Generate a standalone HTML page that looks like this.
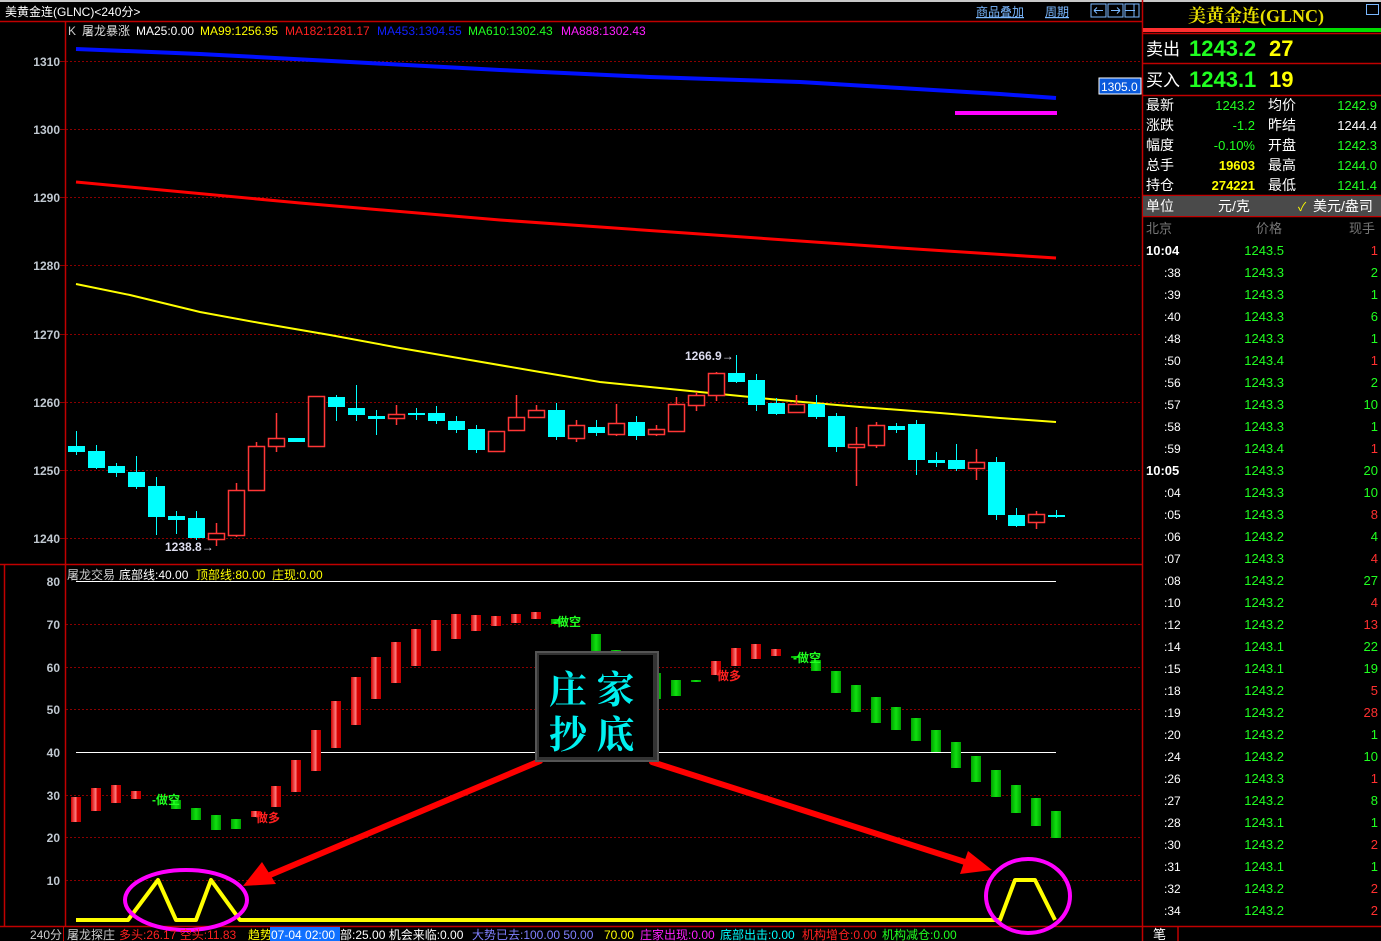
<!DOCTYPE html>
<html><head><meta charset="utf-8"><style>
html,body{margin:0;padding:0;background:#000;width:1381px;height:941px;overflow:hidden;font-family:"Liberation Sans","Noto Sans CJK SC",sans-serif}
svg{display:block}
text{font-family:"Liberation Sans","Noto Sans CJK SC",sans-serif}
</style></head><body>
<svg width="1381" height="941" viewBox="0 0 1381 941" xmlns="http://www.w3.org/2000/svg">
<rect width="1381" height="941" fill="#000"/>
<rect x="0" y="0" width="1381" height="2" fill="#c8c8c8"/>
<text x="5" y="16" fill="#fff" font-size="12">美黄金连(GLNC)&lt;240分&gt;</text>
<text x="976" y="16" fill="#7ab8ff" font-size="12" text-decoration="underline">商品叠加</text>
<text x="1045" y="16" fill="#7ab8ff" font-size="12" text-decoration="underline">周期</text>
<g fill="none" stroke="#7ab8ff" stroke-width="1">
<rect x="1091" y="4" width="15" height="13"/><rect x="1108" y="4" width="15" height="13"/><rect x="1125" y="4" width="14" height="13"/>
<path d="M1094 10.5h9M1094 10.5l3-3M1094 10.5l3 3M1120 10.5h-9M1120 10.5l-3-3M1120 10.5l-3 3M1125 10.5h10M1134 4v13"/>
</g>
<g stroke="#c00000" stroke-width="1.5" fill="none">
<path d="M0 21.5H1142M65.5 21V926M1142.5 0V941M0 564.5H1142M0 926.5H1142M4.5 564V926"/>
</g>
<g stroke="#8a0000" stroke-width="1" stroke-dasharray="2,2">
<path d="M66 61.5H1140M66 129.5H1140M66 197.5H1140M66 265.5H1140M66 334.5H1140M66 402.5H1140M66 470.5H1140M66 538.5H1140"/>
<path d="M66 624.5H1140M66 667.5H1140M66 709.5H1140M66 795.5H1140M66 837.5H1140M66 880.5H1140"/>
</g>
<g stroke="#8a0000"><path d="M60 61.5h5M60 129.5h5M60 197.5h5M60 265.5h5M60 334.5h5M60 402.5h5M60 470.5h5M60 538.5h5"/></g>
<g fill="#c0c8d0" font-size="12" font-weight="bold" text-anchor="end">
<text x="60" y="66">1310</text><text x="60" y="134">1300</text><text x="60" y="202">1290</text><text x="60" y="270">1280</text><text x="60" y="339">1270</text><text x="60" y="407">1260</text><text x="60" y="475">1250</text><text x="60" y="543">1240</text>
<text x="60" y="586">80</text><text x="60" y="629">70</text><text x="60" y="672">60</text><text x="60" y="714">50</text><text x="60" y="757">40</text><text x="60" y="800">30</text><text x="60" y="842">20</text><text x="60" y="885">10</text>
</g>
<g font-size="12">
<text x="68" y="35" fill="#ccc">K</text>
<text x="82" y="35" fill="#ddd">屠龙暴涨</text>
<text x="136" y="35" fill="#fff">MA25:0.00</text>
<text x="200" y="35" fill="#ffff00">MA99:1256.95</text>
<text x="285" y="35" fill="#ff2020">MA182:1281.17</text>
<text x="377" y="35" fill="#1020ff">MA453:1304.55</text>
<text x="468" y="35" fill="#20ff20">MA610:1302.43</text>
<text x="561" y="35" fill="#ff20ff">MA888:1302.43</text>
</g>
<rect x="1099" y="78" width="42" height="16" fill="#0a5adc" stroke="#fff" stroke-width="1"/>
<text x="1101" y="91" fill="#fff" font-size="12">1305.0</text>
<path d="M76 49 L200 54 L350 62 L500 70 L650 77 L800 82 L900 88 L1000 94 L1056 98" stroke="#0010ff" stroke-width="4" fill="none"/>
<path d="M955 113 H1057" stroke="#ff00ff" stroke-width="4"/>
<path d="M76 182 L300 203 L500 220 L700 234 L900 248 L1056 258" stroke="#ff0000" stroke-width="3" fill="none"/>
<path d="M76 284 L130 295 L200 312 L260 323 L330 335 L400 348 L470 360 L540 372 L600 382 L660 388 L720 394 L780 400 L860 407 L940 413 L1000 418 L1056 422" stroke="#ffff00" stroke-width="2" fill="none"/>
<g stroke="#00ffff" stroke-width="1">
<path d="M76.5 431V455M96.5 445V469M116.5 463V477M136.5 456V489M156.5 477V535M176.5 511V534M196.5 511V540M316.5 435V445M336.5 395V421M356.5 385V421M376.5 410V435M416.5 408V420M436.5 406V424M456.5 416V433M476.5 425V453M556.5 403V440M596.5 420V436M636.5 416V440M736.5 355V383M756.5 374V411M776.5 398V415M816.5 395V419M836.5 413V452M896.5 423V433M916.5 420V475M936.5 452V467M956.5 444V471M996.5 457V520M1016.5 508V527M1056.5 510V518"/>
</g>
<g fill="#00ffff">
<rect x="68" y="446" width="17" height="6"/><rect x="88" y="451" width="17" height="17"/><rect x="108" y="466" width="17" height="7"/><rect x="128" y="472" width="17" height="15"/><rect x="148" y="486" width="17" height="31"/><rect x="168" y="516" width="17" height="4"/><rect x="188" y="518" width="17" height="20"/>
<rect x="288" y="438" width="17" height="4"/><rect x="328" y="397" width="17" height="10"/><rect x="348" y="408" width="17" height="7"/><rect x="368" y="416" width="17" height="3"/><rect x="408" y="413" width="17" height="2"/><rect x="428" y="413" width="17" height="8"/><rect x="448" y="421" width="17" height="9"/><rect x="468" y="429" width="17" height="21"/><rect x="548" y="410" width="17" height="27"/><rect x="588" y="427" width="17" height="6"/><rect x="628" y="422" width="17" height="14"/>
<rect x="728" y="373" width="17" height="9"/><rect x="748" y="380" width="17" height="25"/><rect x="768" y="403" width="17" height="11"/><rect x="808" y="404" width="17" height="13"/><rect x="828" y="416" width="17" height="31"/><rect x="888" y="426" width="17" height="4"/><rect x="908" y="424" width="17" height="36"/><rect x="928" y="460" width="17" height="3"/><rect x="948" y="460" width="17" height="9"/><rect x="988" y="462" width="17" height="53"/><rect x="1008" y="515" width="17" height="11"/><rect x="1048" y="515" width="17" height="2"/>
</g>
<g stroke="#ff3636" stroke-width="1.5" fill="#000">
<path d="M216.5 523V546M236.5 483V537M256.5 442V491M276.5 413V452M396.5 405V425M516.5 395V430M536.5 405V418M576.5 420V442M616.5 404V436M656.5 425V436M676.5 397V431M696.5 392V411M716.5 372V401M796.5 395V413M856.5 427V486M876.5 422V448M976.5 449V480M1036.5 511V529"/>
<rect x="208.5" y="533.5" width="16" height="6"/><rect x="228.5" y="490.5" width="16" height="45"/><rect x="248.5" y="446.5" width="16" height="44"/><rect x="268.5" y="438.5" width="16" height="8"/><rect x="308.5" y="396.5" width="16" height="50"/><rect x="388.5" y="414.5" width="16" height="4"/><rect x="488.5" y="431.5" width="16" height="20"/><rect x="508.5" y="417.5" width="16" height="13"/><rect x="528.5" y="410.5" width="16" height="7"/><rect x="568.5" y="425.5" width="16" height="13"/><rect x="608.5" y="423.5" width="16" height="11"/><rect x="648.5" y="429.5" width="16" height="5"/><rect x="668.5" y="404.5" width="16" height="27"/><rect x="688.5" y="395.5" width="16" height="10"/><rect x="708.5" y="373.5" width="16" height="22"/><rect x="788.5" y="404.5" width="16" height="8"/><rect x="848.5" y="444.5" width="16" height="3"/><rect x="868.5" y="425.5" width="16" height="20"/><rect x="968.5" y="462.5" width="16" height="6"/><rect x="1028.5" y="514.5" width="16" height="8"/>
</g>
<text x="165" y="551" fill="#dde" font-size="12" font-weight="bold">1238.8→</text>
<text x="685" y="360" fill="#dde" font-size="12" font-weight="bold">1266.9→</text>
<g font-size="12"><text x="67" y="579" fill="#ccc">屠龙交易</text><text x="119" y="579" fill="#fff">底部线:40.00</text><text x="196" y="579" fill="#ffff00">顶部线:80.00</text><text x="272" y="579" fill="#ffff00">庄现:0.00</text></g>
<path d="M76 581.5H1056M76 752.5H1056" stroke="#fff" stroke-width="1"/>
<defs><linearGradient id="rg" x1="0" x2="1"><stop offset="0" stop-color="#d00000"/><stop offset=".5" stop-color="#ff8080"/><stop offset=".6" stop-color="#e00000"/><stop offset="1" stop-color="#c00000"/></linearGradient>
<linearGradient id="gg" x1="0" x2="1"><stop offset="0" stop-color="#00a000"/><stop offset=".5" stop-color="#10e010"/><stop offset="1" stop-color="#00a000"/></linearGradient></defs>
<g fill="url(#rg)">
<rect x="71" y="797" width="10" height="25"/><rect x="91" y="788" width="10" height="23"/><rect x="111" y="785" width="10" height="18"/><rect x="131" y="791" width="10" height="8"/><rect x="251" y="811" width="10" height="6"/><rect x="271" y="786" width="10" height="21"/><rect x="291" y="760" width="10" height="32"/><rect x="311" y="730" width="10" height="41"/><rect x="331" y="701" width="10" height="47"/><rect x="351" y="677" width="10" height="48"/><rect x="371" y="657" width="10" height="42"/><rect x="391" y="642" width="10" height="41"/><rect x="411" y="629" width="10" height="37"/><rect x="431" y="620" width="10" height="31"/><rect x="451" y="614" width="10" height="25"/><rect x="471" y="615" width="10" height="16"/><rect x="491" y="616" width="10" height="10"/><rect x="511" y="614" width="10" height="9"/><rect x="531" y="612" width="10" height="7"/>
<rect x="711" y="661" width="10" height="14"/><rect x="731" y="648" width="10" height="18"/><rect x="751" y="644" width="10" height="15"/><rect x="771" y="649" width="10" height="7"/>
</g>
<g fill="url(#gg)">
<rect x="171" y="800" width="10" height="9"/><rect x="191" y="808" width="10" height="12"/><rect x="211" y="815" width="10" height="15"/><rect x="231" y="819" width="10" height="10"/><rect x="551" y="619" width="10" height="5"/><rect x="591" y="634" width="10" height="18"/><rect x="611" y="650" width="10" height="8"/><rect x="651" y="673" width="10" height="26"/><rect x="671" y="680" width="10" height="16"/><rect x="691" y="680" width="10" height="2"/><rect x="791" y="656" width="10" height="2"/><rect x="811" y="660" width="10" height="11"/><rect x="831" y="671" width="10" height="22"/><rect x="851" y="685" width="10" height="27"/><rect x="871" y="697" width="10" height="26"/><rect x="891" y="707" width="10" height="23"/><rect x="911" y="718" width="10" height="23"/><rect x="931" y="730" width="10" height="22"/><rect x="951" y="742" width="10" height="26"/><rect x="971" y="756" width="10" height="26"/><rect x="991" y="770" width="10" height="27"/><rect x="1011" y="785" width="10" height="28"/><rect x="1031" y="798" width="10" height="28"/><rect x="1051" y="811" width="10" height="27"/>
</g>
<g font-size="12" font-weight="bold">
<text x="152" y="804" fill="#20ff20">-做空</text><text x="553" y="626" fill="#20ff20">-做空</text><text x="793" y="662" fill="#20ff20">-做空</text>
<text x="256" y="822" fill="#ff2020">做多</text><text x="717" y="680" fill="#ff2020">做多</text>
</g>
<path d="M76 920 H128 L158 880 L176 920 H196 L211 880 L240 920 H1000 L1015 880 H1035 L1055 920" stroke="#ffff00" stroke-width="4" fill="none" stroke-linejoin="round"/>
<ellipse cx="186" cy="900" rx="61" ry="30" fill="none" stroke="#ff00ff" stroke-width="4"/>
<ellipse cx="1028" cy="896" rx="42" ry="37" fill="none" stroke="#ff00ff" stroke-width="4"/>
<g stroke="#ff0000" stroke-width="6" stroke-linecap="round"><path d="M540 761 L270 875"/><path d="M652 762 L965 862"/></g>
<path d="M243 886 L262 862 L276 884 Z" fill="#ff0000"/><path d="M992 870 L960 874 L968 851 Z" fill="#ff0000"/>
<rect x="535" y="651" width="124" height="111" fill="#555"/>
<rect x="537" y="653" width="120" height="107" fill="#333"/>
<rect x="539" y="655" width="114" height="102" fill="#000"/>
<g fill="#00f0f0" font-size="38" font-weight="bold"><text x="549" y="703" style="font-family:'Noto Serif CJK SC',serif">庄 家</text><text x="549" y="748" style="font-family:'Noto Serif CJK SC',serif">抄 底</text></g>
<g font-size="12">
<text x="30" y="939" fill="#ccc">240分</text>
<path d="M63.5 927V941" stroke="#c00000"/>
<text x="67" y="939" fill="#ccc">屠龙探庄</text>
<text x="119" y="939" fill="#ff2020">多头:26.17 空头:11.83</text>
<text x="248" y="939" fill="#ffff00">趋势</text>
<rect x="270" y="927" width="70" height="14" fill="#1070ff"/>
<text x="271" y="939" fill="#fff">07-04 02:00</text>
<text x="340" y="939" fill="#fff">部:25.00 机会来临:0.00</text>
<text x="472" y="939" fill="#8080ff">大势已去:100.00 50.00</text>
<text x="604" y="939" fill="#ffff00">70.00</text>
<text x="640" y="939" fill="#ff20ff">庄家出现:0.00</text>
<text x="720" y="939" fill="#00ffff">底部出击:0.00</text>
<text x="802" y="939" fill="#ff2020">机构增仓:0.00</text>
<text x="882" y="939" fill="#20ff20">机构减仓:0.00</text>
</g>
<text x="1188" y="22" fill="#e8e000" font-size="18" font-weight="bold" style="font-family:'Liberation Serif','Noto Serif CJK SC',serif">美黄金连(GLNC)</text>
<rect x="1366.5" y="4.5" width="12" height="10" fill="none" stroke="#7ab8ff"/>
<rect x="1143" y="28" width="97" height="4" fill="#ff3030"/><rect x="1240" y="28" width="141" height="4" fill="#00dd00"/>
<g stroke="#c00000" stroke-width="1.5"><path d="M1143 33.5H1381M1143 63.5H1381M1143 95.5H1381M1143 195.5H1381M1143 216.5H1381"/></g>
<g font-size="17" fill="#fff"><text x="1146" y="55">卖出</text><text x="1146" y="86">买入</text></g>
<g font-size="22" font-weight="bold"><text x="1189" y="56" fill="#20ff20">1243.2</text><text x="1269" y="56" fill="#ffff00">27</text><text x="1189" y="87" fill="#20ff20">1243.1</text><text x="1269" y="87" fill="#ffff00">19</text></g>
<g font-size="14" fill="#fff"><text x="1146" y="110">最新</text><text x="1146" y="130">涨跌</text><text x="1146" y="150">幅度</text><text x="1146" y="170">总手</text><text x="1146" y="190">持仓</text>
<text x="1268" y="110">均价</text><text x="1268" y="130">昨结</text><text x="1268" y="150">开盘</text><text x="1268" y="170">最高</text><text x="1268" y="190">最低</text></g>
<g font-size="13" text-anchor="end"><text x="1255" y="110" fill="#20ff20">1243.2</text><text x="1255" y="130" fill="#20ff20">-1.2</text><text x="1255" y="150" fill="#20ff20">-0.10%</text><text x="1255" y="170" fill="#ffff00" font-weight="bold">19603</text><text x="1255" y="190" fill="#ffff00" font-weight="bold">274221</text>
<text x="1377" y="110" fill="#20ff20">1242.9</text><text x="1377" y="130" fill="#fff">1244.4</text><text x="1377" y="150" fill="#20ff20">1242.3</text><text x="1377" y="170" fill="#20ff20">1244.0</text><text x="1377" y="190" fill="#20ff20">1241.4</text></g>
<rect x="1143" y="196" width="238" height="20" fill="#4a4a4a"/>
<g font-size="14" fill="#fff"><text x="1146" y="211">单位</text><text x="1218" y="211">元/克</text><text x="1313" y="211">美元/盎司</text></g>
<text x="1298" y="211" fill="#ffff00" font-size="12">✓</text>
<g font-size="13" fill="#777"><text x="1146" y="233">北京</text><text x="1256" y="233">价格</text><text x="1349" y="233">现手</text></g>
<g font-size="12">
<g fill="#fff"><text x="1146" y="255" font-weight="bold" font-size="13">10:04</text><text x="1146" y="475" font-weight="bold" font-size="13">10:05</text>
<text x="1164" y="277">:38</text><text x="1164" y="299">:39</text><text x="1164" y="321">:40</text><text x="1164" y="343">:48</text><text x="1164" y="365">:50</text><text x="1164" y="387">:56</text><text x="1164" y="409">:57</text><text x="1164" y="431">:58</text><text x="1164" y="453">:59</text>
<text x="1164" y="497">:04</text><text x="1164" y="519">:05</text><text x="1164" y="541">:06</text><text x="1164" y="563">:07</text><text x="1164" y="585">:08</text><text x="1164" y="607">:10</text><text x="1164" y="629">:12</text><text x="1164" y="651">:14</text><text x="1164" y="673">:15</text><text x="1164" y="695">:18</text><text x="1164" y="717">:19</text><text x="1164" y="739">:20</text><text x="1164" y="761">:24</text><text x="1164" y="783">:26</text><text x="1164" y="805">:27</text><text x="1164" y="827">:28</text><text x="1164" y="849">:30</text><text x="1164" y="871">:31</text><text x="1164" y="893">:32</text><text x="1164" y="915">:34</text></g>
<g fill="#20ff20" font-size="13" text-anchor="end">
<text x="1284" y="255">1243.5</text><text x="1284" y="277">1243.3</text><text x="1284" y="299">1243.3</text><text x="1284" y="321">1243.3</text><text x="1284" y="343">1243.3</text><text x="1284" y="365">1243.4</text><text x="1284" y="387">1243.3</text><text x="1284" y="409">1243.3</text><text x="1284" y="431">1243.3</text><text x="1284" y="453">1243.4</text><text x="1284" y="475">1243.3</text><text x="1284" y="497">1243.3</text><text x="1284" y="519">1243.3</text><text x="1284" y="541">1243.2</text><text x="1284" y="563">1243.3</text><text x="1284" y="585">1243.2</text><text x="1284" y="607">1243.2</text><text x="1284" y="629">1243.2</text><text x="1284" y="651">1243.1</text><text x="1284" y="673">1243.1</text><text x="1284" y="695">1243.2</text><text x="1284" y="717">1243.2</text><text x="1284" y="739">1243.2</text><text x="1284" y="761">1243.2</text><text x="1284" y="783">1243.3</text><text x="1284" y="805">1243.2</text><text x="1284" y="827">1243.1</text><text x="1284" y="849">1243.2</text><text x="1284" y="871">1243.1</text><text x="1284" y="893">1243.2</text><text x="1284" y="915">1243.2</text></g>
<g font-size="13" text-anchor="end">
<text x="1378" y="255" fill="#ff3030">1</text><text x="1378" y="277" fill="#20ff20">2</text><text x="1378" y="299" fill="#20ff20">1</text><text x="1378" y="321" fill="#20ff20">6</text><text x="1378" y="343" fill="#20ff20">1</text><text x="1378" y="365" fill="#ff3030">1</text><text x="1378" y="387" fill="#20ff20">2</text><text x="1378" y="409" fill="#20ff20">10</text><text x="1378" y="431" fill="#20ff20">1</text><text x="1378" y="453" fill="#ff3030">1</text><text x="1378" y="475" fill="#20ff20">20</text><text x="1378" y="497" fill="#20ff20">10</text><text x="1378" y="519" fill="#ff3030">8</text><text x="1378" y="541" fill="#20ff20">4</text><text x="1378" y="563" fill="#ff3030">4</text><text x="1378" y="585" fill="#20ff20">27</text><text x="1378" y="607" fill="#ff3030">4</text><text x="1378" y="629" fill="#ff3030">13</text><text x="1378" y="651" fill="#20ff20">22</text><text x="1378" y="673" fill="#20ff20">19</text><text x="1378" y="695" fill="#ff3030">5</text><text x="1378" y="717" fill="#ff3030">28</text><text x="1378" y="739" fill="#20ff20">1</text><text x="1378" y="761" fill="#20ff20">10</text><text x="1378" y="783" fill="#ff3030">1</text><text x="1378" y="805" fill="#20ff20">8</text><text x="1378" y="827" fill="#20ff20">1</text><text x="1378" y="849" fill="#ff3030">2</text><text x="1378" y="871" fill="#20ff20">1</text><text x="1378" y="893" fill="#ff3030">2</text><text x="1378" y="915" fill="#ff3030">2</text></g>
</g>
<path d="M1143 926.5H1178V941M1178 926.5H1381" stroke="#c00000" fill="none" stroke-width="1.5"/>
<text x="1153" y="939" fill="#fff" font-size="13">笔</text>
</svg>
</body></html>
